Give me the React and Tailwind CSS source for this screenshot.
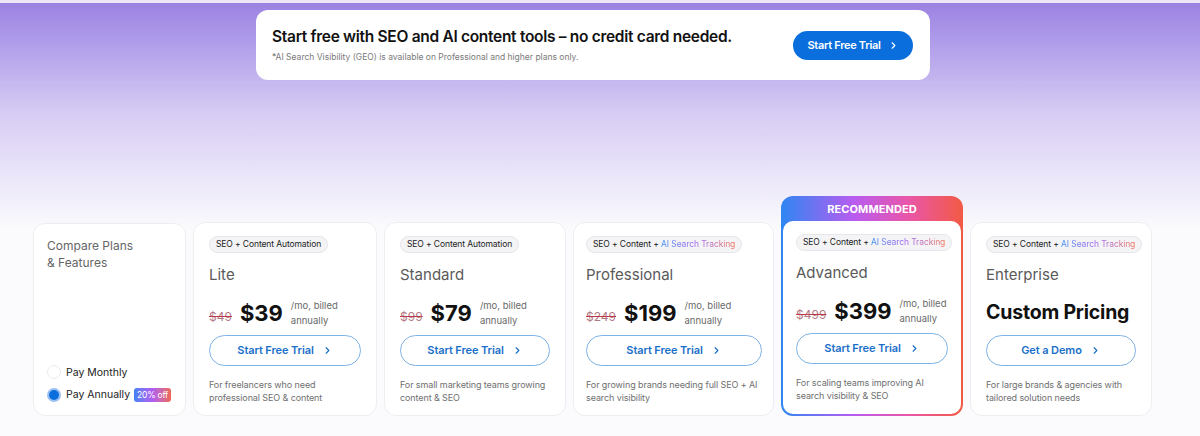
import React from "react";

const Chevron = ({ className = "" }) => (
  <svg viewBox="0 0 24 24" className={className} fill="none" stroke="currentColor" strokeWidth="2.5" strokeLinecap="round" strokeLinejoin="round">
    <path d="M9 6l6 6-6 6" />
  </svg>
);

const Badge = ({ ai }) => (
  <div className="shrink-0 inline-flex self-start items-center h-[17px] px-[6px] rounded-full bg-[#f4f4f6] border border-[#e6e6ea] text-[8.5px] text-[#222] whitespace-nowrap tracking-[-0.1px]">
    {ai ? (
      <>
        SEO + Content +&nbsp;
        <span className="bg-gradient-to-r from-[#2f8cf0] via-[#a35ff0] to-[#f2704a] bg-clip-text text-transparent">AI Search Tracking</span>
      </>
    ) : (
      "SEO + Content Automation"
    )}
  </div>
);

const CtaButton = ({ label }) => (
  <button className="shrink-0 mt-[7px] h-[31px] w-full rounded-full border border-[#7fb2e6] bg-white flex items-center justify-center gap-[8px] text-[11px] font-semibold text-[#1a6fc9] tracking-[-0.1px]">
    {label}
    <Chevron className="w-[11px] h-[11px]" />
  </button>
);

const Card = ({ width, pad = "px-[15px]", ai, name, old, price, desc, custom, cta = "Start Free Trial", inner }) => {
  const content = (
    <>
      <Badge ai={ai} />
      <div className="shrink-0 mt-[13px] text-[15px] leading-[18px] text-[#5a5a5a]">{name}</div>
      {custom ? (
        <div className="shrink-0 mt-[14px] h-[30px] flex items-center text-[19.5px] font-bold text-[#111] tracking-[-0.2px] whitespace-nowrap">Custom Pricing</div>
      ) : (
        <div className="shrink-0 mt-[14px] h-[30px] flex items-center whitespace-nowrap">
          <span className="text-[12px] text-[#b07a84] line-through decoration-[#c0394b] mr-[8px] mt-[8px]">{old}</span>
          <span className="text-[22px] font-bold text-[#111] leading-none">{price}</span>
          <span className="ml-[8px] text-[9.5px] leading-[15px] text-[#6a6a6a]">/mo, billed<br />annually</span>
        </div>
      )}
      <CtaButton label={cta} />
      <div className="shrink-0 mt-[12px] text-[9px] leading-[13px] text-[#707070] whitespace-nowrap tracking-[-0.1px]">{desc}</div>
    </>
  );
  if (inner) return content;
  return (
    <div className={`${width} ${pad} h-[194px] shrink-0 bg-white rounded-[12px] border border-[#eeeef2] pt-[13px] flex flex-col`}>
      {content}
    </div>
  );
};

export default function App() {
  return (
    <div className="w-[1200px] h-[436px] relative overflow-hidden bg-[#fbfbfd]" style={{ fontFamily: "Inter, 'Noto Sans', sans-serif" }}>
      <div className="absolute inset-x-0 top-0 h-[230px] bg-gradient-to-b from-[#9a80e2] via-[#d8cdf4] to-[#fbfbfd]" />
      <div className="relative">
        <div className="h-[3px] bg-[#ece6f5]" />
        <div className="ml-[256px] mt-[7px] w-[674px] h-[70px] bg-white rounded-[12px] flex items-center justify-between pl-[16px] pr-[17px]">
          <div className="flex flex-col">
            <div className="text-[15.5px] font-semibold text-[#111] tracking-[-0.3px] leading-[20px]">Start free with SEO and AI content tools – no credit card needed.</div>
            <div className="mt-[4px] text-[8.5px] text-[#7a7a7a] leading-[12px]">*AI Search Visibility (GEO) is available on Professional and higher plans only.</div>
          </div>
          <button className="w-[120px] h-[29px] rounded-full bg-[#0a6fdd] text-white text-[11px] font-semibold tracking-[-0.3px] flex items-center justify-center gap-[7px]">
            Start Free Trial
            <Chevron className="w-[11px] h-[11px]" />
          </button>
        </div>

        <div className="mt-[116px] ml-[33px] flex items-end gap-[7px]">
          <div className="w-[153px] h-[193px] shrink-0 bg-white rounded-[12px] border border-[#eeeef2] px-[13px] pt-[13px] pb-[12px] flex flex-col justify-between">
            <div className="text-[12px] leading-[17px] text-[#666]">Compare Plans<br />&amp; Features</div>
            <div className="flex flex-col gap-[7px]">
              <div className="flex items-center gap-[5px] text-[10.5px] text-[#222] whitespace-nowrap">
                <span className="shrink-0 w-[14px] h-[14px] rounded-full border border-[#ececec] bg-white" />
                Pay Monthly
              </div>
              <div className="flex items-center gap-[5px] text-[10.5px] text-[#222] whitespace-nowrap">
                <span className="shrink-0 w-[14px] h-[14px] rounded-full border-[2px] border-[#9cc0f2] bg-[#0a6fdd]" />
                Pay Annually
                <span className="-ml-[1px] px-[3px] h-[14px] flex items-center rounded-[3px] bg-gradient-to-r from-[#3b82f6] via-[#b05cf0] to-[#f0654e] text-white text-[8.5px] tracking-[-0.2px]">20% off</span>
              </div>
            </div>
          </div>

          <Card width="w-[184px]" name="Lite" old="$49" price="$39" desc={<>For freelancers who need<br />professional SEO &amp; content</>} />
          <Card width="w-[182px]" name="Standard" old="$99" price="$79" desc={<>For small marketing teams growing<br />content &amp; SEO</>} />
          <Card width="w-[201px]" pad="pl-[12px] pr-[11px]" ai name="Professional" old="$249" price="$199" desc={<>For growing brands needing full SEO + AI<br />search visibility</>} />

          <div className="w-[182px] h-[220px] shrink-0 rounded-[12px] p-[2px] bg-[linear-gradient(to_right,#2f86f2,#b85cf0_40%,#e956a8_70%,#f25a45)] flex flex-col">
            <div className="h-[23px] shrink-0 flex items-center justify-center text-white text-[11px] font-bold tracking-[0.1px]">RECOMMENDED</div>
            <div className="flex-1 bg-white rounded-[10px] px-[13px] pt-[13px] flex flex-col">
              <Card inner ai name="Advanced" old="$499" price="$399" desc={<>For scaling teams improving AI<br />search visibility &amp; SEO</>} />
            </div>
          </div>

          <Card width="w-[182px]" ai name="Enterprise" custom cta="Get a Demo" desc={<>For large brands &amp; agencies with<br />tailored solution needs</>} />
        </div>
      </div>
    </div>
  );
}
